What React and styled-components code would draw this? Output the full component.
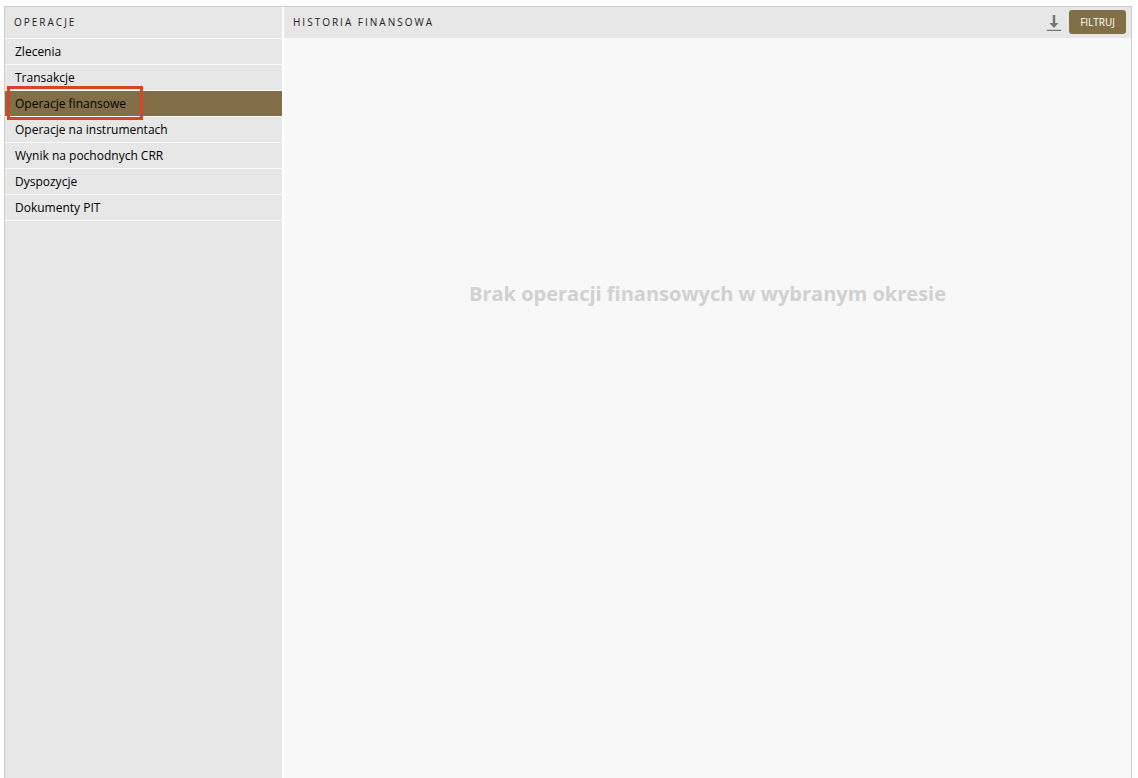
import React, { Component } from "react";
import styled, { createGlobalStyle } from "styled-components";

const GlobalStyle = createGlobalStyle`
  * {
    box-sizing: border-box;
  }

  body {
    margin: 0;
    background: #ffffff;
    color: #000000;
    font-family: "Open Sans", "Noto Sans", sans-serif;
    font-size: 12px;
  }
`;

const Page = styled.div`
  display: flex;
  min-height: 100vh;
  padding: 6px 6px 0 4px;
`;

const Frame = styled.div`
  display: grid;
  grid-template-columns: 277px 1fr;
  column-gap: 2px;
  flex: 1;
  border: 1px solid #cccecc;
  border-bottom: none;
`;

const Sidebar = styled.aside`
  background: #e7e7e7;
`;

const Content = styled.main`
  display: flex;
  flex-direction: column;
  background: #f8f8f8;
`;

const Header = styled.header`
  display: flex;
  align-items: center;
  height: 32px;
  padding: 0 5px 2px 9px;
  background: #e7e7e7;
  border-bottom: 1px solid #fafafa;
`;

const Title = styled.h2`
  flex: 1;
  margin: 0;
  color: #222222;
  font-size: 10px;
  font-weight: 400;
  letter-spacing: 2px;
  text-transform: uppercase;
`;

const Menu = styled.ul`
  margin: 0;
  padding: 0;
  list-style: none;
`;

const MenuItem = styled.li`
  position: relative;
  border-bottom: 1px solid #fafafa;
  background: ${(props) => (props.$active ? "#836f47" : "transparent")};
`;

const MenuLink = styled.a`
  display: block;
  padding: 0 10px;
  color: #000000;
  line-height: 25px;
  text-decoration: none;
`;

const Highlight = styled.span`
  position: absolute;
  top: -5px;
  left: 2px;
  width: 136px;
  height: 34px;
  border: 3px solid #d94426;
  pointer-events: none;
  z-index: 1;
`;

const IconButton = styled.button`
  display: flex;
  margin: 0 7px 0 0;
  padding: 0;
  border: none;
  background: none;
  color: #747474;
  cursor: pointer;
`;

const FilterButton = styled.button`
  height: 24px;
  padding: 0 11px;
  border: none;
  border-radius: 3px;
  background: #836f47;
  color: #ffffff;
  font-family: inherit;
  font-size: 10px;
  font-weight: 500;
  cursor: pointer;
`;

const EmptyMessage = styled.p`
  margin: 240px 20px 0;
  color: #d1d1d1;
  font-size: 20px;
  font-weight: 700;
  line-height: 30px;
  text-align: center;
`;

const DownloadIcon = () => (
  <svg width="16" height="18" viewBox="0 0 16 18" aria-hidden="true">
    <path
      d="M6.8 2h2.4v8h3.3L8 15l-4.5-5h3.3zM.8 16.7h14.4v1.2H.8z"
      fill="currentColor"
    />
  </svg>
);

export default class App extends Component {
  state = {
    active: 2,
    items: [
      { id: 0, name: "Zlecenia", path: "#zlecenia" },
      { id: 1, name: "Transakcje", path: "#transakcje" },
      { id: 2, name: "Operacje finansowe", path: "#finansowe", marked: true },
      { id: 3, name: "Operacje na instrumentach", path: "#instrumenty" },
      { id: 4, name: "Wynik na pochodnych CRR", path: "#pochodne" },
      { id: 5, name: "Dyspozycje", path: "#dyspozycje" },
      { id: 6, name: "Dokumenty PIT", path: "#pit" },
    ],
  };

  render() {
    return (
      <Page>
        <GlobalStyle />
        <Frame>
          <Sidebar>
            <Header>
              <Title>Operacje</Title>
            </Header>
            <nav>
              <Menu>
                {this.state.items.map((item) => (
                  <MenuItem
                    key={item.id}
                    $active={item.id === this.state.active}
                  >
                    <MenuLink
                      href={item.path}
                      onClick={() => this.setState({ active: item.id })}
                    >
                      {item.name}
                    </MenuLink>
                    {item.marked && <Highlight />}
                  </MenuItem>
                ))}
              </Menu>
            </nav>
          </Sidebar>

          <Content>
            <Header>
              <Title>Historia finansowa</Title>
              <IconButton type="button" aria-label="Pobierz">
                <DownloadIcon />
              </IconButton>
              <FilterButton type="button">FILTRUJ</FilterButton>
            </Header>
            <EmptyMessage>
              Brak operacji finansowych w wybranym okresie
            </EmptyMessage>
          </Content>
        </Frame>
      </Page>
    );
  }
}
